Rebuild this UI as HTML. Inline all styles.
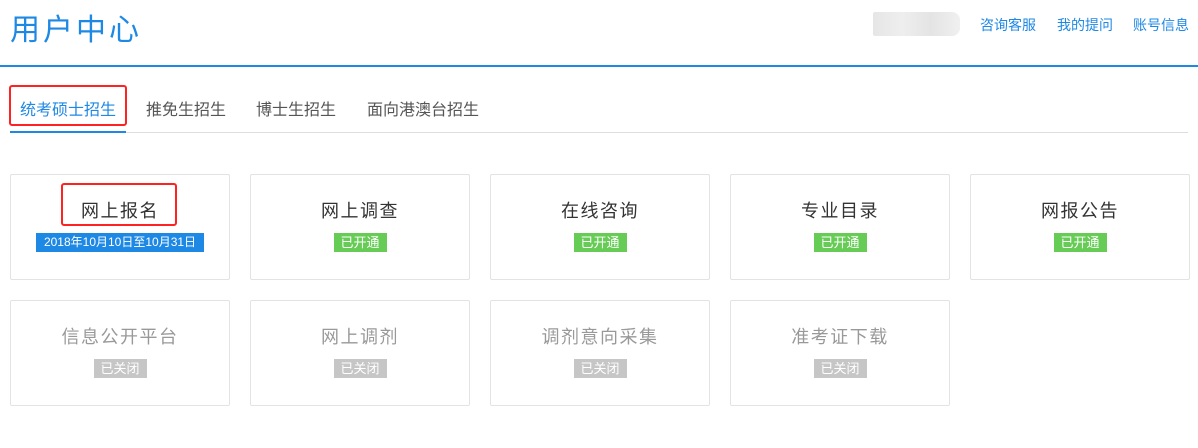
<!DOCTYPE html>
<html><head><meta charset="utf-8"><style>
*{margin:0;padding:0;box-sizing:border-box}
body{width:1198px;height:448px;background:#fff;font-family:"Liberation Sans","Noto Sans CJK SC",sans-serif;position:relative;overflow:hidden}
.title{position:absolute;left:10px;top:5px;font-size:30px;color:#1e88e5;letter-spacing:3px;font-weight:400}
.blur{position:absolute;left:873px;top:12px;width:87px;height:24px;background:linear-gradient(90deg,#e6e6e6,#eee,#e4e4e4,#f0f0f0);border-radius:2px 8px 8px 2px}
.links{position:absolute;top:15px;font-size:14px;color:#1e88e5}
.hline{position:absolute;left:0;top:65px;width:1198px;height:2px;background:#1e88e5}
.tabs{position:absolute;top:96px;font-size:16px;color:#555}
.gline{position:absolute;left:10px;top:132px;width:1178px;height:1px;background:#ddd}
.bline{position:absolute;left:10px;top:131px;width:116px;height:2px;background:#1e88e5}
.red{position:absolute;border:2px solid #f22;border-radius:3px}
.card{position:absolute;width:220px;height:106px;border:1px solid #e3e3e3;border-radius:2px;text-align:center}
.card .t{margin-top:25px;font-size:18px;color:#333;line-height:22px;letter-spacing:1.5px}
.card .b{display:inline-block;margin-top:11px;font-size:13px;color:#fff;background:#66cc55;padding:0 3px;height:19px;line-height:19px;width:53px}
.card.off .t{color:#999}
.card.off .b{background:#c6c6c6}
</style></head><body>
<div class="title">用户中心</div>
<div class="blur"></div>
<div class="links" style="left:980px">咨询客服</div>
<div class="links" style="left:1057px">我的提问</div>
<div class="links" style="left:1133px">账号信息</div>
<div class="hline"></div>
<div class="tabs" style="left:20px;color:#1e88e5">统考硕士招生</div>
<div class="tabs" style="left:146px">推免生招生</div>
<div class="tabs" style="left:256px">博士生招生</div>
<div class="tabs" style="left:367px">面向港澳台招生</div>
<div class="gline"></div><div class="bline"></div>
<div class="red" style="left:9px;top:85px;width:118px;height:41px"></div>

<div class="card" style="left:10px;top:174px"><div class="t">网上报名</div><div class="b" style="width:168px;background:#1e88e5;padding:0;font-size:12px">2018年10月10日至10月31日</div></div>
<div class="red" style="left:61px;top:183px;width:116px;height:43px"></div>
<div class="card" style="left:250px;top:174px"><div class="t">网上调查</div><div class="b">已开通</div></div>
<div class="card" style="left:490px;top:174px"><div class="t">在线咨询</div><div class="b">已开通</div></div>
<div class="card" style="left:730px;top:174px"><div class="t">专业目录</div><div class="b">已开通</div></div>
<div class="card" style="left:970px;top:174px"><div class="t">网报公告</div><div class="b">已开通</div></div>

<div class="card off" style="left:10px;top:300px"><div class="t">信息公开平台</div><div class="b">已关闭</div></div>
<div class="card off" style="left:250px;top:300px"><div class="t">网上调剂</div><div class="b">已关闭</div></div>
<div class="card off" style="left:490px;top:300px"><div class="t">调剂意向采集</div><div class="b">已关闭</div></div>
<div class="card off" style="left:730px;top:300px"><div class="t">准考证下载</div><div class="b">已关闭</div></div>
</body></html>
